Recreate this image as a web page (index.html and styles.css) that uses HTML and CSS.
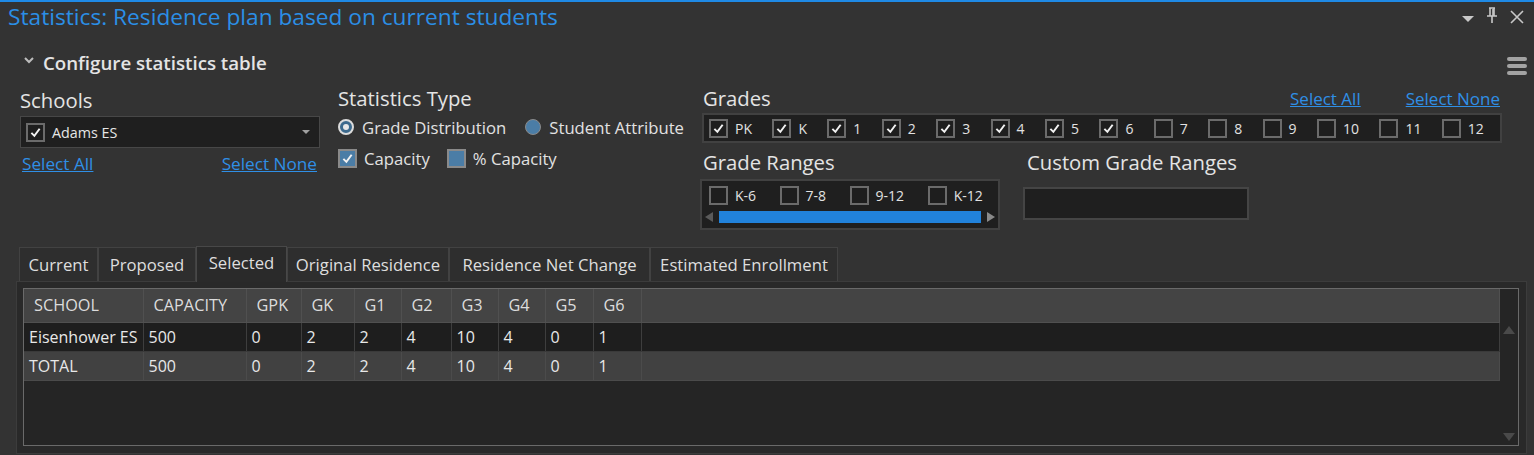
FILE: index.html
```html
<!DOCTYPE html>
<html>
<head>
<meta charset="utf-8">
<link rel="stylesheet" href="styles.css">
</head>
<body>
<div class="window">
  <div class="titlebar">
    <div class="title">Statistics: Residence plan based on current students</div>
    <div class="tools">
      <svg class="tool" width="14" height="14" viewBox="0 0 14 14"><path d="M1 5 L13 5 L7 11 Z" fill="#c8c8c8"/></svg>
      <svg class="tool" width="14" height="18" viewBox="0 0 14 18"><path d="M4 2 H10 M5 2 V10 M9 2 V10 M2 10 H12 M7 10 V17" stroke="#c8c8c8" stroke-width="1.6" fill="none"/><path d="M8 3 V10" stroke="#c8c8c8" stroke-width="1.6"/></svg>
      <svg class="tool" width="16" height="16" viewBox="0 0 16 16"><path d="M2 2 L14 14 M14 2 L2 14" stroke="#c8c8c8" stroke-width="1.6"/></svg>
    </div>
  </div>

  <div class="config-head">
    <div class="expander">
      <svg width="12" height="10" viewBox="0 0 12 10"><path d="M2 3 L6 7 L10 3" stroke="#bdbdbd" stroke-width="2" fill="none"/></svg>
      <span>Configure statistics table</span>
    </div>
    <div class="menu-btn"><i></i><i></i><i></i></div>
  </div>

  <div class="config-body">
    <div class="col-schools">
      <div class="label">Schools</div>
      <div class="combo">
        <span class="cb checked"><svg viewBox="0 0 20 20"><path d="M4.5 10.5 L8.5 14.5 L15.5 5" /></svg></span>
        <span class="combo-text">Adams ES</span>
        <svg class="combo-arrow" width="10" height="6" viewBox="0 0 10 6"><path d="M1 1 H9 L5 5 Z" fill="#a0a0a0"/></svg>
      </div>
      <div class="links">
        <a>Select All</a>
        <a>Select None</a>
      </div>
    </div>

    <div class="col-type">
      <div class="label">Statistics Type</div>
      <div class="opt-row">
        <span class="opt"><span class="radio on"></span>Grade Distribution</span>
        <span class="opt"><span class="radio"></span>Student Attribute</span>
      </div>
      <div class="opt-row second">
        <span class="opt"><span class="cb blue checked"><svg viewBox="0 0 20 20"><path d="M4.5 10.5 L8.5 14.5 L15.5 5" /></svg></span>Capacity</span>
        <span class="opt"><span class="cb blue"></span>% Capacity</span>
      </div>
    </div>

    <div class="col-grades">
      <div class="grades-head">
        <div class="label">Grades</div>
        <div class="grade-links"><a>Select All</a><a>Select None</a></div>
      </div>
      <div class="grade-box">
        <span class="gi"><span class="cb checked"><svg viewBox="0 0 20 20"><path d="M4.5 10.5 L8.5 14.5 L15.5 5" /></svg></span>PK</span>
        <span class="gi"><span class="cb checked"><svg viewBox="0 0 20 20"><path d="M4.5 10.5 L8.5 14.5 L15.5 5" /></svg></span>K</span>
        <span class="gi"><span class="cb checked"><svg viewBox="0 0 20 20"><path d="M4.5 10.5 L8.5 14.5 L15.5 5" /></svg></span>1</span>
        <span class="gi"><span class="cb checked"><svg viewBox="0 0 20 20"><path d="M4.5 10.5 L8.5 14.5 L15.5 5" /></svg></span>2</span>
        <span class="gi"><span class="cb checked"><svg viewBox="0 0 20 20"><path d="M4.5 10.5 L8.5 14.5 L15.5 5" /></svg></span>3</span>
        <span class="gi"><span class="cb checked"><svg viewBox="0 0 20 20"><path d="M4.5 10.5 L8.5 14.5 L15.5 5" /></svg></span>4</span>
        <span class="gi"><span class="cb checked"><svg viewBox="0 0 20 20"><path d="M4.5 10.5 L8.5 14.5 L15.5 5" /></svg></span>5</span>
        <span class="gi"><span class="cb checked"><svg viewBox="0 0 20 20"><path d="M4.5 10.5 L8.5 14.5 L15.5 5" /></svg></span>6</span>
        <span class="gi"><span class="cb"></span>7</span>
        <span class="gi"><span class="cb"></span>8</span>
        <span class="gi"><span class="cb"></span>9</span>
        <span class="gi"><span class="cb"></span>10</span>
        <span class="gi"><span class="cb"></span>11</span>
        <span class="gi"><span class="cb"></span>12</span>
      </div>
      <div class="ranges-row">
        <div class="ranges">
          <div class="label">Grade Ranges</div>
          <div class="range-box">
            <div class="range-items">
              <span class="gi"><span class="cb"></span>K-6</span>
              <span class="gi"><span class="cb"></span>7-8</span>
              <span class="gi"><span class="cb"></span>9-12</span>
              <span class="gi"><span class="cb"></span>K-12</span>
            </div>
            <div class="hscroll">
              <svg width="10" height="12" viewBox="0 0 10 12"><path d="M9 1 V11 L1 6 Z" fill="#5a5a5a"/></svg>
              <div class="thumb"></div>
              <svg width="10" height="12" viewBox="0 0 10 12"><path d="M1 1 V11 L9 6 Z" fill="#8a8a8a"/></svg>
            </div>
          </div>
        </div>
        <div class="custom">
          <div class="label">Custom Grade Ranges</div>
          <div class="custom-input"></div>
        </div>
      </div>
    </div>
  </div>

  <div class="tabs">
    <div class="tab t-current">Current</div>
    <div class="tab t-proposed">Proposed</div>
    <div class="tab t-selected active">Selected</div>
    <div class="tab t-original">Original Residence</div>
    <div class="tab t-net">Residence Net Change</div>
    <div class="tab t-estimated">Estimated Enrollment</div>
  </div>

  <div class="panel">
    <div class="grid">
      <div class="grid-main">
        <table class="stats">
          <colgroup>
            <col class="c-school"><col class="c-cap"><col class="c-gpk"><col class="c-gk"><col class="c-g1"><col class="c-g2"><col class="c-g3"><col class="c-g4"><col class="c-g5"><col class="c-g6"><col>
          </colgroup>
          <thead>
            <tr><th>SCHOOL</th><th>CAPACITY</th><th>GPK</th><th>GK</th><th>G1</th><th>G2</th><th>G3</th><th>G4</th><th>G5</th><th>G6</th><th></th></tr>
          </thead>
          <tbody>
            <tr class="r1"><td>Eisenhower ES</td><td>500</td><td>0</td><td>2</td><td>2</td><td>4</td><td>10</td><td>4</td><td>0</td><td>1</td><td></td></tr>
            <tr class="r2"><td>TOTAL</td><td>500</td><td>0</td><td>2</td><td>2</td><td>4</td><td>10</td><td>4</td><td>0</td><td>1</td><td></td></tr>
          </tbody>
        </table>
      </div>
      <div class="vscroll">
        <svg width="14" height="10" viewBox="0 0 14 10"><path d="M1 9 H13 L7 1 Z" fill="#4a4a4a"/></svg>
        <svg width="14" height="10" viewBox="0 0 14 10"><path d="M1 1 H13 L7 9 Z" fill="#4a4a4a"/></svg>
      </div>
    </div>
  </div>
</div>
</body>
</html>
```

FILE: styles.css
```css
* { box-sizing: border-box; }
html, body { margin: 0; padding: 0; }
body {
  background: #333333;
  width: 1534px;
  height: 455px;
  overflow: hidden;
  font-family: "Open Sans", "Noto Sans", sans-serif;
  color: #e2e2e2;
}
.window {
  border-top: 2px solid #1f8ae6;
  height: 455px;
  display: flex;
  flex-direction: column;
}
.titlebar {
  display: flex;
  justify-content: space-between;
  align-items: flex-start;
  height: 40px;
  padding-left: 8px;
}
.title {
  color: #2b8fe6;
  font-size: 22.7px;
  line-height: 30px;
}
.tools {
  display: flex;
  align-items: flex-start;
  gap: 10px;
  padding: 4px 9px 0 0;
}
.tool:first-child { margin-top: 5px; }
.tool:last-child { margin-top: 3px; }

.config-head {
  display: flex;
  justify-content: space-between;
  align-items: center;
  padding: 0 7px 0 23px;
  height: 40px;
}
.expander {
  display: flex;
  align-items: center;
  gap: 8px;
  font-size: 18.7px;
  font-weight: 600;
  color: #e4e4e4;
}
.expander svg { margin-bottom: 4px; }
.menu-btn {
  display: flex;
  flex-direction: column;
  gap: 3px;
  margin-top: 8px;
}
.menu-btn i {
  display: block;
  width: 20px;
  height: 4px;
  border-radius: 2px;
  background: #a3a3a3;
}

.config-body {
  display: flex;
  padding-left: 20px;
  height: 165px;
}
.label {
  font-size: 20.3px;
  font-weight: 500;
  color: #e4e4e4;
  line-height: 24px;
}
.col-schools { width: 300px; padding-top: 6px; }
.col-schools .label { margin-bottom: 4px; }
.combo {
  height: 32px;
  background: #1f1f1f;
  border: 1px solid #474747;
  display: flex;
  align-items: center;
  padding-left: 5px;
  padding-right: 8px;
}
.combo-text { font-size: 14.3px; margin-left: 7px; flex: 1; color: #e6e6e6; }
.links {
  display: flex;
  justify-content: space-between;
  padding: 5px 3px 0 2px;
  line-height: 22px;
}
a {
  color: #2f8fe6;
  text-decoration: underline;
  font-size: 17.2px;
  cursor: pointer;
}

.cb {
  width: 19px;
  height: 19px;
  border: 2px solid #6b6b6b;
  background: #1e1e1e;
  display: inline-flex;
  flex-shrink: 0;
}
.cb svg { width: 15px; height: 15px; }
.cb svg path { stroke: #f2f2f2; stroke-width: 2.6; fill: none; }
.cb.blue { background: #4b7da6; border-color: #8a8a8a; }

.col-type { width: 364px; margin-left: 18px; padding-top: 4px; }
.col-type .label { margin-bottom: 2px; }
.opt-row { display: flex; gap: 19px; align-items: center; height: 30px; font-size: 16.7px; }
.opt { display: inline-flex; align-items: center; gap: 8px; color: #e2e2e2; }
.opt-row.second { gap: 17px; margin-top: 1px; }
.opt-row.second .opt { gap: 7px; }
.radio {
  width: 16px; height: 16px; border-radius: 50%;
  background: #4b7da6;
  border: 1px solid #8a8a8a;
  display: inline-block;
  position: relative;
}
.radio.on {
  border: 2px solid #dcdcdc;
  background: #3d6a8d;
}
.radio.on::after {
  content: "";
  position: absolute;
  left: 3px; top: 3px;
  width: 6px; height: 6px; border-radius: 50%;
  background: #e8e8e8;
}

.col-grades { width: 800px; padding-top: 4px; }
.grades-head { display: flex; justify-content: space-between; align-items: center; padding-left: 1px; }
.grade-links { display: flex; gap: 45px; padding-right: 2px; }
.grade-links a { font-size: 17px; }
.grade-box {
  margin-top: 3px;
  height: 30px;
  background: #1f1f1f;
  border: 2px solid #414141;
  display: flex;
  align-items: center;
  padding-left: 5px;
  gap: 20.4px;
}
.gi { display: inline-flex; align-items: center; gap: 7px; font-size: 14px; color: #e2e2e2; }

.ranges-row { display: flex; margin-top: 7px; }
.ranges { width: 300px; margin-left: -2px; }
.ranges .label { padding-left: 3px; margin-bottom: 5px; }
.range-box {
  height: 51px;
  background: #1f1f1f;
  border: 2px solid #414141;
  padding: 5px 0 0 7px;
}
.range-items { display: flex; gap: 23.5px; }
.hscroll { display: flex; align-items: center; gap: 5px; margin: 6px 0 0 -5px; }
.thumb { width: 262px; height: 12px; background: #2182db; }
.custom { margin-left: 23px; }
.custom .label { padding-left: 4px; margin-bottom: 13px; }
.custom-input {
  width: 226px; height: 33px;
  background: #1f1f1f;
  border: 2px solid #454545;
}

.tabs {
  display: flex;
  align-items: flex-end;
  padding-left: 19px;
  height: 34px;
}
.tab {
  height: 34px;
  border: 1px solid #424242;
  border-bottom: none;
  background: #2e2e2e;
  font-size: 16.7px;
  line-height: 34px;
  color: #dedede;
  text-align: center;
  white-space: nowrap;
}
.t-current { width: 79px; }
.t-proposed { width: 98px; }
.t-selected { width: 91px; }
.t-original { width: 162px; }
.t-net { width: 201px; }
.t-estimated { width: 188px; }
.tab.active {
  height: 36px;
  line-height: 32px;
  background: #2a2a2a;
  border-color: #484848;
  position: relative;
  z-index: 1;
  margin-bottom: -1px;
}
.panel {
  margin: 0 7px 0 16px;
  height: 173px;
  border: 1px solid #3c3c3c;
  background: #292929;
  padding: 6px 7px 7px 6px;
}
.grid {
  height: 158px;
  border: 1px solid #6a6a6a;
  background: #252525;
  display: flex;
}
.grid-main { flex: 1; }
.stats {
  width: 100%;
  border-collapse: collapse;
  table-layout: fixed;
  font-size: 16px;
}
.c-school { width: 119px; }
.c-cap { width: 103px; }
.c-gpk { width: 55px; }
.c-gk { width: 53px; }
.c-g1 { width: 47px; }
.c-g2 { width: 50px; }
.c-g3 { width: 47px; }
.c-g4 { width: 47px; }
.c-g5 { width: 48px; }
.c-g6 { width: 48px; }
.stats th {
  height: 33px;
  background: #444444;
  color: #dcdcdc;
  font-weight: normal;
  font-size: 16.3px;
  text-align: left;
  padding: 0 0 0 10px;
  border-right: 1px solid #505050;
  border-bottom: 1px solid #505050;
  white-space: nowrap;
  overflow: hidden;
}
.stats td {
  height: 29px;
  padding: 0 0 0 5px;
  border-right: 1px solid #3e3e3e;
  color: #e8e8e8;
  white-space: nowrap;
  overflow: hidden;
}
.r1 td { background: #1e1e1e; border-bottom: 1px solid #3a3a3a; }
.r2 td { background: #414141; border-right-color: #4b4b4b; border-bottom: 1px solid #4b4b4b; }
.vscroll {
  width: 18px;
  display: flex;
  flex-direction: column;
  justify-content: space-between;
  align-items: center;
  padding: 36px 0 3px;
}
```
